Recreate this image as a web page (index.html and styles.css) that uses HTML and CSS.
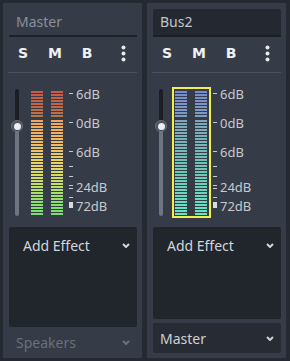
FILE: index.html
```html
<!DOCTYPE html>
<html>
<head>
<meta charset="utf-8">
<link rel="stylesheet" href="styles.css">
</head>
<body>
<div class="mixer">
  <div class="bus">
    <div class="name flat">Master</div>
    <div class="toggles">
      <span class="tg">S</span><span class="tg">M</span><span class="tg">B</span>
      <span class="tg kebab"><i></i><i></i><i></i></span>
    </div>
    <div class="sep"></div>
    <div class="meterrow">
      <div class="slider"><div class="track-top"></div><div class="grab"><div class="dot"></div></div><div class="track-bot"></div></div>
      <div class="meter">
        <div class="chan"><div class="hot warm"></div><div class="main warm"></div></div>
        <div class="chan"><div class="hot warm"></div><div class="main warm"></div></div>
      </div>
      <div class="scale">
        <div class="tick" style="top:7px"></div><div class="lbl" style="top:7px">6dB</div>
        <div class="tick" style="top:36px"></div><div class="lbl" style="top:36px">0dB</div>
        <div class="tick" style="top:65px"></div><div class="lbl" style="top:65px">6dB</div>
        <div class="tick" style="top:80px"></div>
        <div class="tick" style="top:90px"></div>
        <div class="tick" style="top:99px"></div><div class="lbl" style="top:100px">24dB</div>
        <div class="tick" style="top:102px"></div>
        <div class="tick" style="top:111px"></div>
        <div class="sq"></div><div class="lbl" style="top:119px">72dB</div>
      </div>
    </div>
    <div class="effects tall">
      <div class="addfx"><span>Add Effect</span><svg class="chev" width="8" height="5" viewBox="0 0 8 5"><polyline points="1,1 4,4 7,1" fill="none" stroke="currentColor" stroke-width="2"/></svg></div>
    </div>
    <div class="output flat dim"><span>Speakers</span><svg class="chev" width="8" height="5" viewBox="0 0 8 5"><polyline points="1,1 4,4 7,1" fill="none" stroke="currentColor" stroke-width="2"/></svg></div>
  </div>

  <div class="bus">
    <div class="name field">Bus2</div>
    <div class="toggles">
      <span class="tg">S</span><span class="tg">M</span><span class="tg">B</span>
      <span class="tg kebab"><i></i><i></i><i></i></span>
    </div>
    <div class="sep"></div>
    <div class="meterrow">
      <div class="slider"><div class="track-top"></div><div class="grab"><div class="dot"></div></div><div class="track-bot"></div></div>
      <div class="meter selected">
        <div class="chan"><div class="hot cool"></div><div class="main cool"></div></div>
        <div class="chan"><div class="hot cool"></div><div class="main cool"></div></div>
      </div>
      <div class="scale">
        <div class="tick" style="top:7px"></div><div class="lbl" style="top:7px">6dB</div>
        <div class="tick" style="top:36px"></div><div class="lbl" style="top:36px">0dB</div>
        <div class="tick" style="top:65px"></div><div class="lbl" style="top:65px">6dB</div>
        <div class="tick" style="top:80px"></div>
        <div class="tick" style="top:90px"></div>
        <div class="tick" style="top:99px"></div><div class="lbl" style="top:100px">24dB</div>
        <div class="tick" style="top:102px"></div>
        <div class="tick" style="top:111px"></div>
        <div class="sq"></div><div class="lbl" style="top:119px">72dB</div>
      </div>
    </div>
    <div class="effects short">
      <div class="addfx"><span>Add Effect</span><svg class="chev" width="8" height="5" viewBox="0 0 8 5"><polyline points="1,1 4,4 7,1" fill="none" stroke="currentColor" stroke-width="2"/></svg></div>
    </div>
    <div class="output button"><span>Master</span><svg class="chev" width="8" height="5" viewBox="0 0 8 5"><polyline points="1,1 4,4 7,1" fill="none" stroke="currentColor" stroke-width="2"/></svg></div>
  </div>
</div>
</body>
</html>
```

FILE: styles.css
```css
html, body {
  margin: 0;
  padding: 0;
  background: #252a32;
  width: 290px;
  height: 361px;
  overflow: hidden;
  font-family: "Noto Sans", "DejaVu Sans", sans-serif;
}

.mixer {
  display: flex;
  gap: 5px;
  padding: 3px;
}

.bus {
  --panel: #353b47;
  width: 139px;
  height: 355px;
  box-sizing: border-box;
  background: var(--panel);
  padding: 6px 5px 0 6px;
  display: flex;
  flex-direction: column;
}

.name {
  height: 28px;
  box-sizing: border-box;
  border-bottom: 2px solid #1e2127;
  font-size: 14px;
  line-height: 26px;
  padding-left: 7px;
}
.name.flat {
  color: #8b909a;
}
.name.field {
  background: #242830;
  border-bottom-color: #1b1e24;
  color: #c3c6cb;
  border-radius: 2px 2px 0 0;
}

.toggles {
  margin-top: 2px;
  height: 28px;
  display: flex;
  gap: 4px;
}
.tg {
  width: 28px;
  display: flex;
  align-items: center;
  justify-content: center;
  color: #eef0f2;
  font-weight: bold;
  font-size: 14px;
  font-family: "DejaVu Sans", "Noto Sans", sans-serif;
}
.kebab {
  margin-left: auto;
  flex-direction: column;
  gap: 3px;
}
.kebab i {
  display: block;
  width: 3px;
  height: 3px;
  border-radius: 50%;
  background: #e8eaec;
  box-shadow: 0 0 0 0.5px #e8eaec;
}

.sep {
  margin-top: 5px;
  height: 1px;
  background: #4a5060;
  margin-left: -1px;
}

.meterrow {
  margin-top: 14px;
  height: 131px;
  display: flex;
}

.slider {
  width: 16px;
  padding-top: 2px;
  padding-bottom: 2px;
  display: flex;
  flex-direction: column;
  align-items: center;
}
.track-top {
  width: 4px;
  height: 32px;
  background: #1c1f25;
  border-radius: 2px 2px 0 0;
}
.grab {
  width: 12px;
  height: 12px;
  margin: -1px 0;
  box-sizing: border-box;
  border-radius: 50%;
  background: #4e545f;
  border: 1.5px solid #6a707b;
  display: flex;
  align-items: center;
  justify-content: center;
  position: relative;
  z-index: 1;
}
.dot {
  width: 7px;
  height: 7px;
  border-radius: 50%;
  background: #eceef0;
}
.track-bot {
  width: 4px;
  flex: 1;
  background: #6e7480;
  border-radius: 0 0 2px 2px;
}

.meter {
  margin-left: 3px;
  width: 39px;
  box-sizing: border-box;
  border: 2px solid transparent;
  padding: 2px 2px 1px 1px;
  display: flex;
  gap: 8px;
}
.meter.selected {
  border-color: #f2ee4a;
}
.chan {
  width: 12px;
  display: flex;
  flex-direction: column;
  gap: 3px;
}
.hot { height: 26px; }
.main { height: 95px; }

.hot.warm {
  background:
    repeating-linear-gradient(to bottom, transparent 0 2px, var(--panel) 2px 3px),
    linear-gradient(to bottom, #c65c4a, #b8724a);
}
.main.warm {
  background:
    repeating-linear-gradient(to bottom, transparent 0 2px, var(--panel) 2px 3px),
    linear-gradient(to bottom, #f2a45e 0%, #ecc262 30%, #e6d766 50%, #c2e066 68%, #92e06c 85%, #74e06e 100%);
}
.hot.cool {
  background:
    repeating-linear-gradient(to bottom, transparent 0 2px, var(--panel) 2px 3px),
    linear-gradient(to bottom, #788acc, #7e9cc6);
}
.main.cool {
  background:
    repeating-linear-gradient(to bottom, transparent 0 2px, var(--panel) 2px 3px),
    linear-gradient(to bottom, #7fa6ba 0%, #78b6b8 30%, #70c6b6 55%, #68d8bc 80%, #62e8c2 100%);
}

.scale {
  position: relative;
  flex: 1;
}
.tick {
  position: absolute;
  left: 2px;
  width: 4px;
  height: 1px;
  margin-top: -1px;
  background: #c8cbd0;
}
.sq {
  position: absolute;
  left: 2px;
  top: 115px;
  width: 4px;
  height: 6px;
  background: #d8dade;
}
.lbl {
  position: absolute;
  left: 9px;
  transform: translateY(-50%);
  font-size: 13px;
  line-height: 16px;
  color: #c6c9ce;
  white-space: nowrap;
}

.effects {
  margin-top: 9px;
  background: #21252c;
  border-radius: 2px;
}
.effects.tall { height: 100px; }
.effects.short { height: 92px; }

.addfx {
  height: 36px;
  display: flex;
  align-items: center;
  justify-content: space-between;
  padding: 0 7px 0 14px;
  font-size: 14px;
  color: #d3d5d9;
}
.chev {
  display: block;
  color: #d3d5d9;
}

.output {
  display: flex;
  align-items: center;
  justify-content: space-between;
  font-size: 14px;
  box-sizing: border-box;
}
.output.flat {
  margin-top: 2px;
  height: 26px;
  padding: 0 7px 0 7px;
}
.output.dim, .output.dim .chev {
  color: #6b707b;
}
.output.button {
  margin-top: 4px;
  height: 30px;
  background: #272b34;
  border-radius: 2px;
  padding: 0 7px 0 7px;
  color: #ced1d5;
}
.output.button .chev {
  color: #ced1d5;
}
```
